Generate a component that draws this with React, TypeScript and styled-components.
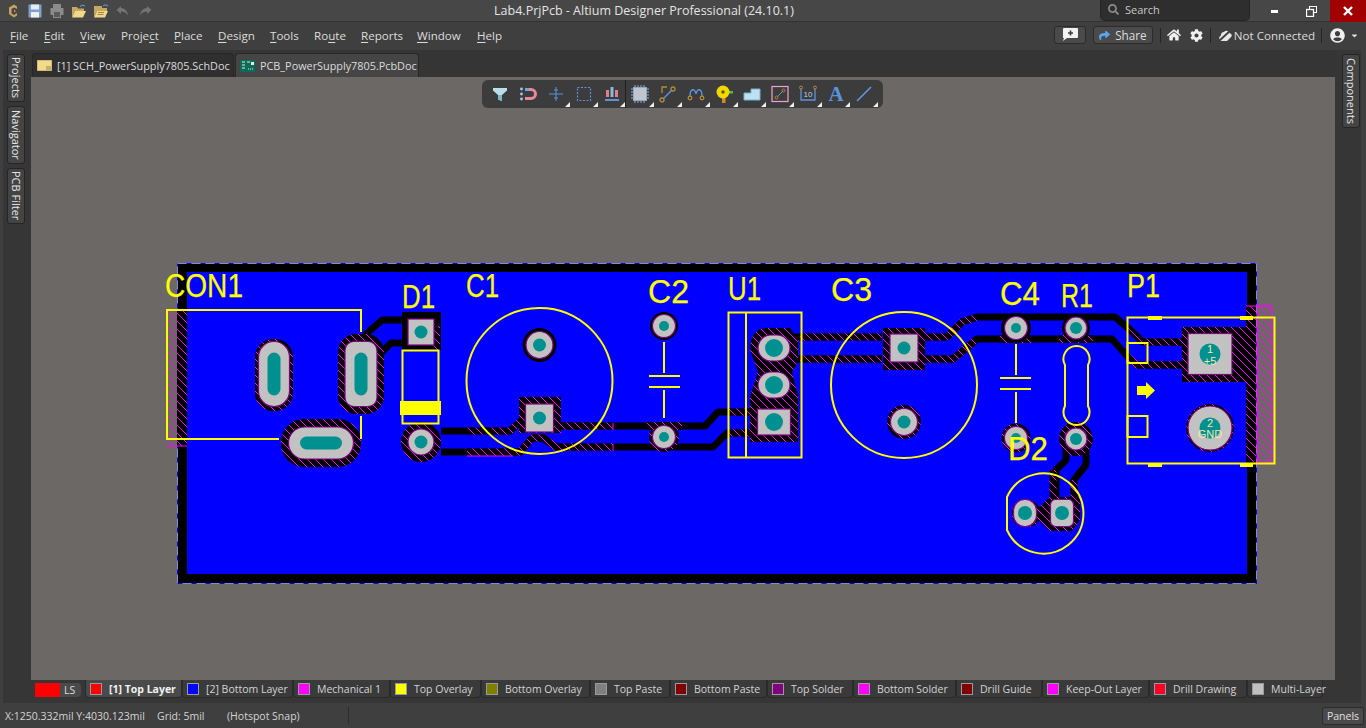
import React from "react";
import styled, { createGlobalStyle } from "styled-components";
import { FaHome, FaCog, FaUserCircle, FaSearch, FaShare, FaCaretDown } from "react-icons/fa";

const Global = createGlobalStyle`
  html, body { margin: 0; padding: 0; overflow: hidden; background: #3c3c3c; }
  #root { width: 1366px; height: 728px; }
  * { box-sizing: border-box; }
`;

const Shell = styled.div`
  width: 1366px; height: 728px; display: flex; flex-direction: column;
  font-family: "Open Sans", "Noto Sans", "Liberation Sans", sans-serif;
  color: #dcdcdc; background: #3c3c3c; overflow: hidden;
`;
const TitleBar = styled.div`
  height: 22px; display: grid; grid-template-columns: 493px 302px 1fr; align-items: center;
  background: #474747; border-bottom: 1px solid #333;
`;
const QuickBar = styled.div`display: flex; align-items: center; gap: 6px; padding-left: 5px; height: 21px;`;
const QuickIcon = styled.svg<{ $dim?: boolean }>`width: 16px; height: 16px; flex: none; opacity: ${(p) => (p.$dim ? 0.45 : 1)};`;
const TitleText = styled.div`font-size: 12.5px; color: #e4e4e4; white-space: nowrap; text-align: center;`;
const TitleRight = styled.div`display: flex; justify-content: flex-end; align-items: stretch; height: 21px;`;
const SearchBox = styled.div`
  width: 150px; height: 21px; background: #2e2e2e; border: 1px solid #252525; border-top: 0; border-radius: 0 0 5px 5px;
  display: flex; align-items: center; gap: 6px; padding: 0 0 2px 7px; font-size: 11px; color: #c8c8c8; margin-right: 6px;
  svg { color: #8a8a8a; font-size: 11px; }
`;
const WinButton = styled.div<{ $close?: boolean; $w: number }>`
  width: ${(p) => p.$w}px; height: 22px; display: flex; align-items: center; justify-content: center;
  background: ${(p) => (p.$close ? "#a00000" : "transparent")}; color: #fff;
`;
const MenuBar = styled.div`
  height: 28px; display: flex; align-items: center; background: #3f3f3f; padding: 0 0 2px 10px;
`;
const MenuItem = styled.span<{ $w: number }>`
  width: ${(p) => p.$w}px; flex: none; font-size: 11.6px; color: #dcdcdc; white-space: nowrap;
  u { text-underline-offset: 2px; }
`;
const MenuRight = styled.div`margin-left: auto; display: flex; align-items: center; height: 26px; padding-right: 5px;`;
const BarButton = styled.div<{ $w: number }>`
  width: ${(p) => p.$w}px; height: 18px; border: 1px solid #2b2b2b; border-radius: 3px; background: #4a4a4a;
  display: flex; align-items: center; justify-content: center; gap: 5px; font-size: 11.7px; color: #dcdcdc;
  margin-right: 7px;
`;
const BarSep = styled.div<{ $m: string }>`width: 1px; height: 15px; background: #252525; margin: ${(p) => p.$m};`;
const NotConnected = styled.span`font-size: 11.6px; color: #dcdcdc; margin-left: 2px; white-space: nowrap;`;

const Middle = styled.div`flex: 1; min-height: 0; display: flex;`;
const SideDock = styled.div<{ $side: "left" | "right" }>`
  width: 31px; flex: none; background: #363636; display: flex; flex-direction: column; gap: 4px;
  padding: 4px 0 0 7px;
  box-shadow: inset ${(p) => (p.$side === "left" ? "3px" : "-5px")} 0 0 #3f3f3f;
`;
const SideTab = styled.div<{ $h: number }>`
  width: 18px; height: ${(p) => p.$h}px; background: #444; border: 1px solid #252525; border-radius: 3px;
  writing-mode: vertical-rl; font-size: 11px; color: #e4e4e4; display: flex; align-items: center; justify-content: center;
  white-space: nowrap; line-height: 16px;
`;
const Center = styled.div`flex: 1; min-width: 0; display: flex; flex-direction: column;`;
const TabRow = styled.div`height: 27px; flex: none; display: flex; align-items: flex-end; gap: 1px; background: #353535; padding-left: 1px;`;
const DocTab = styled.div<{ $w: number; $active?: boolean }>`
  width: ${(p) => p.$w}px; height: 24px; display: flex; align-items: center; gap: 5px; padding-left: ${(p) => (p.$active ? "4px" : "4px")};
  font-size: 10.85px; white-space: nowrap; overflow: hidden; color: #dcdcdc;
  background: ${(p) => (p.$active ? "#454545" : "#2f2f2f")};
  border: 1px solid #272727; border-bottom: 0; border-radius: 4px 4px 0 0;
`;
const Canvas = styled.div`flex: 1; min-height: 0; position: relative; background: #6c6866; overflow: hidden;`;
const BoardSvg = styled.svg`display: block; width: 1304px; height: 602px;`;
const Toolbar = styled.div`
  position: absolute; left: 451px; top: 3px; height: 28px; padding: 0 5px 0 4px; display: flex;
  background: #3c3c3c; border-radius: 6px;
`;
const ToolCell = styled.div<{ $corner?: boolean; $sep?: boolean }>`
  position: relative; width: 28px; height: 28px; display: flex; align-items: center; justify-content: center;
  ${(p) => (p.$sep ? "border-right: 1px solid #1f1f1f;" : "")}
  ${(p) =>
    p.$corner
      ? `&::after { content: ""; position: absolute; right: 0; bottom: 1px; width: 0; height: 0;
         border-left: 5px solid transparent; border-bottom: 5px solid #eee; }`
      : ""}
`;
const ToolIcon = styled.svg`width: 20px; height: 20px; display: block;`;
const LetterA = styled.span`font-family: "Liberation Serif", serif; font-weight: 700; font-size: 21px; color: #5b94dc; line-height: 1;`;

const LayerBar = styled.div`height: 23px; flex: none; display: flex; align-items: flex-start; background: #363636;`;
const LsBlock = styled.div`
  margin: 3px 4px 0 4px; width: 46px; height: 14px; display: flex; border-radius: 0 4px 4px 0; background: #4a4a4a; overflow: hidden;
  font-size: 10.5px; color: #ddd; align-items: center; flex: none;
`;
const LsRed = styled.div`width: 25px; height: 14px; background: #ff0000; margin-right: 4px;`;
const LayerTab = styled.div<{ $active?: boolean; $w: number }>`
  width: ${(p) => p.$w}px; flex: none; height: 18px; display: flex; align-items: center; gap: 8px; padding-left: 5px;
  font-size: 10.5px; white-space: nowrap; color: ${(p) => (p.$active ? "#f2f2f2" : "#d4d4d4")};
  font-weight: ${(p) => (p.$active ? 700 : 400)};
  background: ${(p) => (p.$active ? "#4a4a4a" : "#3a3a3a")};
  border: 1px solid #2a2a2a; border-top: 0; border-radius: 0 0 4px 4px;
`;
const Swatch = styled.span<{ $c: string }>`
  width: 10px; height: 10px; flex: none; background: ${(p) => p.$c}; outline: 1px solid #9a9a9a; outline-offset: 0;
`;
const StatusBar = styled.div`
  height: 25px; flex: none; display: flex; align-items: center; background: #3f3f3f; font-size: 10.5px; color: #d4d4d4;
  padding-left: 5px; white-space: nowrap;
`;
const StatusCell = styled.span<{ $w: number }>`width: ${(p) => p.$w}px; flex: none;`;
const StatusSep = styled.div`width: 1px; height: 17px; background: #2d2d2d;`;
const PanelsBtn = styled.div`
  margin-left: auto; margin-right: 2px; width: 42px; height: 18px; background: #4a4a4a; border: 1px solid #2b2b2b; border-radius: 3px;
  display: flex; align-items: center; justify-content: center; font-size: 10.5px; color: #e0e0e0;
`;
const Silk = styled.text`
  font-family: "Liberation Sans", sans-serif; fill: #ffff00; stroke: #ffff00; stroke-width: 0.25px; font-size: 33px;
`;
const PadLabel = styled.text`
  font-family: "Liberation Sans", sans-serif; fill: #f4e8a8; font-size: 11px; text-anchor: middle;
`;

const GOLD = "#b08a3c";
const BLUE = "#5b94dc";

const layers: { name: string; c: string; w: number; active?: boolean }[] = [
  { name: "[1] Top Layer", c: "#ff0000", w: 97, active: true },
  { name: "[2] Bottom Layer", c: "#0000ff", w: 111 },
  { name: "Mechanical 1", c: "#ff00ff", w: 97 },
  { name: "Top Overlay", c: "#ffff00", w: 91 },
  { name: "Bottom Overlay", c: "#808000", w: 109 },
  { name: "Top Paste", c: "#808080", w: 80 },
  { name: "Bottom Paste", c: "#800000", w: 97 },
  { name: "Top Solder", c: "#800080", w: 86 },
  { name: "Bottom Solder", c: "#ff00ff", w: 103 },
  { name: "Drill Guide", c: "#800000", w: 86 },
  { name: "Keep-Out Layer", c: "#ff00ff", w: 107 },
  { name: "Drill Drawing", c: "#ff002a", w: 98 },
  { name: "Multi-Layer", c: "#c0c0c0", w: 76 },
];

const menus: [React.ReactNode, number][] = [
  [<><u>F</u>ile</>, 34],
  [<><u>E</u>dit</>, 36],
  [<><u>V</u>iew</>, 41],
  [<>Proje<u>c</u>t</>, 53],
  [<><u>P</u>lace</>, 44],
  [<><u>D</u>esign</>, 52],
  [<><u>T</u>ools</>, 44],
  [<>Ro<u>u</u>te</>, 47],
  [<><u>R</u>eports</>, 56],
  [<><u>W</u>indow</>, 60],
  [<><u>H</u>elp</>, 40],
];

const I = (p: { children: React.ReactNode }) => <ToolIcon viewBox="0 0 20 20">{p.children}</ToolIcon>;

const tools: { el: React.ReactNode; corner?: boolean; sep?: boolean }[] = [
  { el: <I><path d="M3 4h14v2.500l-5 4.500v6l-4-1.500V11L3 6.500z" fill="#b9dfe8" /><path d="M8 11v4.500l4 1.500v-6z" fill="#7fb6c6" /></I> },
  { el: <I><circle cx="3.500" cy="5" r="1.400" fill="#a8c8e8" /><circle cx="3.500" cy="10" r="1.400" fill="#a8c8e8" /><circle cx="3.500" cy="15" r="1.400" fill="#a8c8e8" /><path d="M7 5.500h6a4.500 4.500 0 0 1 0 9H7" fill="none" stroke="#e88a9c" strokeWidth="3" /><path d="M7 5.500h4" stroke="#6aa5e0" strokeWidth="3" /></I> },
  { el: <I><path d="M10 3v14M3 10h14M8 6h4M8 14h4" stroke={BLUE} strokeWidth="1" fill="none" /></I>, corner: true },
  { el: <I><rect x="3.500" y="3.500" width="13" height="13" fill="none" stroke={BLUE} strokeWidth="1.200" strokeDasharray="2 1.500" /></I>, corner: true },
  { el: <I><rect x="4" y="6" width="3" height="7" fill="#e87a8c" /><rect x="8.500" y="3" width="3" height="10" fill="#7fc0d8" /><rect x="13" y="6" width="3" height="7" fill="#e87a8c" /><rect x="3" y="15" width="14" height="2" fill={BLUE} /></I>, corner: true, sep: true },
  { el: <I><rect x="3.500" y="3.500" width="13" height="13" fill="#c0c6cc" stroke="#8fa8c8" /><path d="M1 5h2M1 8h2M1 11h2M1 14h2M17 5h2M17 8h2M17 11h2M17 14h2M5 1v2M8 1v2M11 1v2M14 1v2M5 17v2M8 17v2M11 17v2M14 17v2" stroke="#8fb0d8" /></I>, corner: true },
  { el: <I><path d="M5 15l9-9" stroke={BLUE} strokeWidth="1.400" /><circle cx="4" cy="16" r="2" fill="none" stroke={GOLD} strokeWidth="1.300" /><circle cx="15" cy="5" r="2" fill="none" stroke={GOLD} strokeWidth="1.300" /><path d="M4 9V3h5" fill="none" stroke={GOLD} strokeWidth="1.300" /></I>, corner: true },
  { el: <I><path d="M4 12C4 4 9 4 10 10C11 4 16 4 16 12" fill="none" stroke={BLUE} strokeWidth="1.400" /><circle cx="4" cy="14" r="1.800" fill="none" stroke={GOLD} strokeWidth="1.300" /><circle cx="16" cy="14" r="1.800" fill="none" stroke={GOLD} strokeWidth="1.300" /></I>, corner: true },
  { el: <I><rect x="8" y="12" width="3.500" height="7" fill="#d88a20" /><rect x="13" y="7" width="6" height="2.500" fill="#4ac04a" /><circle cx="9" cy="8" r="6.500" fill="#f0d800" /><circle cx="9" cy="8" r="1.800" fill="#6a5800" /></I>, corner: true },
  { el: <I><path d="M2 9h7V5h9v11H2z" fill="#bfe0f0" stroke="#7ab0d8" /></I>, corner: true },
  { el: <I><rect x="2" y="2.500" width="16" height="15" fill="none" stroke="#f0a0d8" strokeWidth="1.200" /><path d="M7 13l6-6" stroke={BLUE} /><circle cx="6.500" cy="13.500" r="1.500" fill="none" stroke={GOLD} /><circle cx="13.500" cy="6.500" r="1.500" fill="none" stroke={GOLD} /></I>, corner: true },
  { el: <I><path d="M3 5v11h14V5" fill="none" stroke={BLUE} strokeWidth="1.300" /><circle cx="3" cy="3.500" r="1.500" fill="none" stroke={GOLD} /><circle cx="17" cy="3.500" r="1.500" fill="none" stroke={GOLD} /><text x="10" y="13" fontSize="8" textAnchor="middle" fill="#b8cfe8" fontFamily="Liberation Sans">10</text></I>, corner: true },
  { el: <LetterA>A</LetterA>, corner: true },
  { el: <I><path d="M3 17L17 3" stroke={BLUE} strokeWidth="1.700" /></I>, corner: true },
];

/* ---------- PCB primitives ---------- */
const Track = ({ d, w = 7 }: { d: string; w?: number }) => <path d={d} fill="none" stroke="#000" strokeWidth={w} strokeLinejoin="round" />;
const Hatched = ({ d, w = 7 }: { d: string; w?: number }) => <path d={d} fill="none" stroke="url(#hatch)" strokeWidth={w} strokeLinejoin="round" />;
const Round = ({ x, y, r, d }: { x: number; y: number; r: number; d: number }) => (
  <g>
    <circle cx={x} cy={y} r={r} fill="#c2c2c2" stroke="#800080" strokeWidth="1.200" />
    <circle cx={x} cy={y} r={d} fill="#009090" />
  </g>
);
const Square = ({ x, y, w, h, d }: { x: number; y: number; w: number; h: number; d: number }) => (
  <g>
    <rect x={x - w / 2} y={y - h / 2} width={w} height={h} fill="#c2c2c2" stroke="#800080" strokeWidth="1.200" />
    <circle cx={x} cy={y} r={d} fill="#009090" />
  </g>
);
const Oblong = ({ x, y, w, h, dw, dh, rx }: { x: number; y: number; w: number; h: number; dw: number; dh: number; rx?: number }) => (
  <g>
    <rect x={x - w / 2} y={y - h / 2} width={w} height={h} rx={rx ?? Math.min(w, h) / 2} fill="#c2c2c2" stroke="#800080" strokeWidth="1.200" />
    <rect x={x - dw / 2} y={y - dh / 2} width={dw} height={dh} rx={Math.min(dw, dh) / 2} fill="#009090" />
  </g>
);
const Y = "#ffff00";

const Board = () => (
  <BoardSvg viewBox="31 77 1304 602">
    <defs>
      <pattern id="hatch" patternUnits="userSpaceOnUse" width="8" height="8">
        <rect width="8" height="8" fill="#000" />
        <path d="M-2 -2L10 10M-2 6L2 10M6 -2L10 2" stroke="#ff00ff" strokeWidth="1" />
      </pattern>
      <pattern id="hatchGrey" patternUnits="userSpaceOnUse" width="8" height="8">
        <path d="M-2 -2L10 10M-2 6L2 10M6 -2L10 2" stroke="#ff00ff" strokeWidth="1" />
      </pattern>
    </defs>

    {/* board + pour */}
    <rect x="177" y="263" width="1080" height="321" fill="#000" />
    <rect x="187" y="272" width="1060" height="302" fill="#0000ff" />
    <rect x="177.500" y="263.500" width="1079" height="320" fill="none" stroke="#0000ff" strokeWidth="1" />
    <rect x="177.500" y="263.500" width="1079" height="320" fill="none" stroke="#a8a8e0" strokeWidth="1" strokeDasharray="9 5" strokeOpacity="0.8" />

    {/* connector keep-out strips */}
    <rect x="177" y="309" width="10" height="137" fill="url(#hatch)" />
    <rect x="166" y="309" width="11" height="137" fill="url(#hatchGrey)" />
    <path d="M166 446H187" stroke="#ff00ff" />
    <rect x="1246" y="306" width="10" height="156" fill="url(#hatch)" />
    <rect x="1257" y="306" width="15" height="156" fill="url(#hatchGrey)" stroke="#ff00ff" strokeWidth="1" />
    <path d="M1246 306H1272" stroke="#ff00ff" />

    {/* tracks: plain copper clearance */}
    <Track d="M365 335L382 320H407" />
    <Track d="M378 356L391 343H407" />
    <Track d="M441 431H510L522 420" />
    <Track d="M441 452H520L532 438H543L556 447H613" />
    <Track d="M555 426H705L718 412H753" />
    <Track d="M613 447H713L727 433H753" />
    <Track d="M792 337H882" />
    <Track d="M792 359H882" />
    <Track d="M925 337H947L962 322L977 317H1115L1128 328" />
    <Track d="M925 359H953L977 339H1112L1128 357" />
    <Track d="M1128 328L1143 342H1182" />
    <Track d="M1128 357L1137 365H1182" />
    <Track d="M1066 440V460L1056 470V500" />
    <Track d="M1086 440V465L1074 480V510" />

    {/* tracks: hatched parts */}
    <Hatched d="M467 431H510L522 420" />
    <Hatched d="M467 452H520L532 438H543L556 447H613" />
    <Hatched d="M555 426H613" />
    <Hatched d="M728 412H753" />
    <Hatched d="M728 433H753" />
    <Hatched d="M800 337H882" />
    <Hatched d="M800 359H882" />
    <Hatched d="M925 337H947L962 322L977 317" />
    <Hatched d="M925 359H953L977 339" />
    <Hatched d="M1128 328L1143 342H1182" />
    <Hatched d="M1128 357L1137 365H1182" />
    <Hatched d="M1053 470V500" />
    <Hatched d="M1074 480V510" />
    <path d="M467 456H513" stroke="#ff00ff" />
    <path d="M613 423V430M613 444V451" stroke="#ff00ff" />

    {/* thermal / clearance areas */}
    <rect x="402" y="312" width="39" height="38" fill="#000" />
    <rect x="433" y="326" width="7" height="24" fill="url(#hatch)" />
    <rect x="338" y="334" width="46" height="80" rx="18" fill="url(#hatch)" />
    <rect x="255" y="339" width="38" height="72" rx="18" fill="url(#hatch)" />
    <rect x="281" y="419" width="80" height="48" rx="23" fill="url(#hatch)" />
    <circle cx="421" cy="442" r="20" fill="url(#hatch)" />
    <rect x="519" y="397" width="42" height="36" fill="url(#hatch)" />
    <path d="M750 350Q750 328 768 328H790L798 340V362L792 372L798 396V442H750V396L758 372Z" fill="url(#hatch)" />
    <rect x="883" y="328" width="42" height="42" fill="url(#hatch)" />
    <rect x="647" y="422" width="35" height="8" fill="url(#hatch)" />
    <rect x="1000" y="335" width="31" height="8" fill="url(#hatch)" />
    <rect x="1059" y="335" width="34" height="8" fill="url(#hatch)" />
    <circle cx="1016" cy="328" r="15" fill="#000" />
    <circle cx="664" cy="437" r="15" fill="url(#hatch)" />
    <circle cx="1076" cy="439" r="17" fill="url(#hatch)" />
    <circle cx="1016" cy="438" r="14.500" fill="url(#hatch)" />
    <circle cx="1076" cy="328" r="14" fill="#000" />
    <circle cx="664" cy="326" r="14" fill="#000" />
    <circle cx="539.500" cy="345" r="17" fill="#000" />
    <circle cx="904" cy="422" r="17" fill="url(#hatch)" />
    <circle cx="1210" cy="428" r="24" fill="url(#hatch)" />
    <rect x="1182" y="327" width="64" height="55" fill="url(#hatch)" />
    <rect x="1012" y="500" width="28" height="27" rx="12" fill="url(#hatch)" />
    <path d="M1032 514L1050 497H1080V520L1072 531H1050Z" fill="url(#hatch)" />

    {/* pads */}
    <Oblong x={274} y={374} w={31} h={65} dw={13} dh={43} />
    <Oblong x={361} y={374} w={32} h={65} dw={13} dh={43} rx={9} />
    <Oblong x={321} y={443} w={65} h={32} dw={42} dh={13} />
    <Square x={421} y={332} w={26} h={26} d={6.500} />
    <Round x={421} y={442} r={13} d={6.500} />
    <Round x={539.500} y={345} r={13.500} d={6.500} />
    <Square x={539.500} y={418} w={28} h={28} d={6.500} />
    <Round x={664} y={326} r={11.500} d={5} />
    <Round x={664} y={437} r={11.500} d={5} />
    <Oblong x={774} y={348} w={32} h={26} dw={18} dh={18} rx={13} />
    <Oblong x={774} y={385} w={32} h={26} dw={18} dh={18} rx={13} />
    <Square x={774} y={422} w={33} h={26} d={9} />
    <Square x={904} y={348} w={28} h={28} d={6.500} />
    <Round x={904} y={422} r={13.500} d={6.500} />
    <Round x={1016} y={328} r={11.500} d={5} />
    <Round x={1016} y={438} r={11.500} d={5} />
    <Round x={1076} y={328} r={11} d={6} />
    <Round x={1076} y={439} r={11} d={6} />
    <Square x={1210} y={354} w={44} h={41} d={10.500} />
    <Round x={1210} y={428} r={22} d={10.500} />
    <Oblong x={1025} y={513} w={23} h={27} dw={14} dh={14} rx={11} />
    <Oblong x={1062} y={513} w={23} h={27} dw={14} dh={14} rx={5} />
    <PadLabel x="1210" y="353">1</PadLabel>
    <PadLabel x="1210" y="365">+5</PadLabel>
    <PadLabel x="1210" y="427">2</PadLabel>
    <PadLabel x="1210" y="438">GND</PadLabel>

    {/* silkscreen */}
    <g fill="none" stroke={Y} strokeWidth="2">
      <path d="M279 439H167V310H361V332M361 416V439" />
      <rect x="402.500" y="350.500" width="36" height="73" />
      <circle cx="539.500" cy="381" r="73" />
      <path d="M664 342V373M649 376H680M649 387H680M664 390V418" />
      <rect x="728.500" y="312.500" width="73" height="145" />
      <path d="M746 312V458" />
      <circle cx="904" cy="385" r="73" />
      <path d="M1016 344V375M1000 378H1031M1000 389H1031M1016 392V423" />
      <path d="M1065 365A13 13 0 1 1 1088 365V406A13 13 0 1 1 1065 406Z" />
      <path d="M1007 497A40 40 0 1 1 1007 530Z" />
      <rect x="1127.500" y="317.500" width="147" height="146" />
      <rect x="1127.500" y="343" width="20" height="20" />
      <rect x="1127.500" y="416" width="20" height="21" />
    </g>
    <rect x="400" y="401" width="41" height="14" fill={Y} />
    <path d="M1137 386H1146V382L1155 390.500L1146 399V395H1137Z" fill={Y} />
    <path d="M1148 316h14v4h-14zM1240 316h13v4h-13zM1148 463h14v4h-14zM1240 463h13v4h-13z" fill={Y} />

    <Silk x="165" y="297" textLength="78" lengthAdjust="spacingAndGlyphs">CON1</Silk>
    <Silk x="402" y="308" textLength="33" lengthAdjust="spacingAndGlyphs">D1</Silk>
    <Silk x="466" y="297" textLength="33" lengthAdjust="spacingAndGlyphs">C1</Silk>
    <Silk x="648" y="303" textLength="41" lengthAdjust="spacingAndGlyphs">C2</Silk>
    <Silk x="728" y="300" textLength="33" lengthAdjust="spacingAndGlyphs">U1</Silk>
    <Silk x="831" y="301" textLength="41" lengthAdjust="spacingAndGlyphs">C3</Silk>
    <Silk x="1000" y="305" textLength="40" lengthAdjust="spacingAndGlyphs">C4</Silk>
    <Silk x="1061" y="307" textLength="32" lengthAdjust="spacingAndGlyphs">R1</Silk>
    <Silk x="1127" y="297" textLength="33" lengthAdjust="spacingAndGlyphs">P1</Silk>
    <Silk x="1008" y="460" textLength="40" lengthAdjust="spacingAndGlyphs">D2</Silk>
  </BoardSvg>
);

export default function App() {
  return (
    <Shell>
      <Global />
      <TitleBar>
        <QuickBar>
          <QuickIcon viewBox="0 0 16 16"><path d="M9 1.500L4 4.500V11l5 3.500 3-2V10L9 12 6.500 10.500V6L9 4.500 12 6V3.500zM9 6.800l2 1.200-2 1.300z" fill="#c9a262" /></QuickIcon>
          <QuickIcon viewBox="0 0 16 16"><path d="M1.500 1.500h13v13h-13z" fill="#7f9fd0" /><rect x="4" y="1.500" width="8" height="5" fill="#e8ecf4" /><rect x="4" y="9" width="8" height="5.500" fill="#f0f0f0" /></QuickIcon>
          <QuickIcon viewBox="0 0 16 16"><path d="M4 1h8v4H4zM1.500 5h13v7H12v3H4v-3H1.500z" fill="#8b8b8b" /><rect x="5" y="9" width="6" height="5" fill="#5a5a5a" /></QuickIcon>
          <QuickIcon viewBox="0 0 16 16"><path d="M1 4h5l1 1.500h6V8H4L1 14z" fill="#c8a860" /><path d="M4 8h11l-3 6.500H1z" fill="#f0d88c" /><path d="M9 3.500Q11 1 14 3" stroke="#6aa5e0" fill="none" /></QuickIcon>
          <QuickIcon viewBox="0 0 16 16"><path d="M1 3h8v2h5v3H4l-3 6z" fill="#c8a860" /><path d="M4 8h11l-3 6.500H1z" fill="#f0d88c" /><path d="M5 9.500h6M4.500 11.500h6" stroke="#a08440" /><path d="M10 3Q12 .5 15 3" stroke="#6aa5e0" fill="none" /></QuickIcon>
          <QuickIcon viewBox="0 0 16 16" $dim><path d="M6 3L1.500 7 6 11V8.500c3 0 5.500 1 7 4 0-4-3-7-7-7.500z" fill="#aaa" /></QuickIcon>
          <QuickIcon viewBox="0 0 16 16" $dim><path d="M10 3l4.500 4L10 11V8.500c-3 0-5.500 1-7 4 0-4 3-7 7-7.500z" fill="#aaa" /></QuickIcon>
        </QuickBar>
        <TitleText>Lab4.PrjPcb - Altium Designer Professional (24.10.1)</TitleText>
        <TitleRight>
          <SearchBox><FaSearch />Search</SearchBox>
          <WinButton $w={37}><svg width="8" height="3"><rect width="7" height="3" fill="#fff" /></svg></WinButton>
          <WinButton $w={37}><svg width="11" height="11" fill="none" stroke="#fff"><rect x="3.500" y="0.500" width="7" height="6" /><rect x="0.500" y="3.500" width="7" height="7" fill="#474747" strokeWidth="1.300" /></svg></WinButton>
          <WinButton $w={36} $close><svg width="10" height="10" stroke="#fff" strokeWidth="2.400"><path d="M1 1l8 8M9 1l-8 8" /></svg></WinButton>
        </TitleRight>
      </TitleBar>

      <MenuBar>
        {menus.map(([label, w], i) => <MenuItem key={i} $w={w}>{label}</MenuItem>)}
        <MenuRight>
          <BarButton $w={32}><svg width="16" height="14" viewBox="0 0 16 14"><path d="M2 0h13a1 1 0 0 1 1 1v8a1 1 0 0 1-1 1H5L1 13l1-3H1V1a1 1 0 0 1 1-1z" fill="#f2f2f2" /><path d="M8.500 2.500v5M6 5h5" stroke="#3a3a3a" strokeWidth="1.600" /></svg></BarButton>
          <BarButton $w={60}><FaShare color="#5ba4ef" size={11} />Share</BarButton>
          <BarSep $m="0" />
          <FaHome size={14} color="#f0f0f0" style={{ marginLeft: 6 }} />
          <FaCog size={13} color="#f0f0f0" style={{ marginLeft: 9 }} />
          <BarSep $m="0 6px 0 7px" />
          <svg width="14" height="13" viewBox="0 0 14 13" style={{ marginLeft: 1 }}><path d="M3 6.500A3 3 0 0 1 6 3a3.500 3.500 0 0 1 6 1.500c1.500 0 2 1.500 1.500 3L9 12H3A3 3 0 0 1 3 6.500z" fill="#e8e8e8" /><path d="M1 12L13 1" stroke="#3f3f3f" strokeWidth="2" /></svg>
          <NotConnected>Not Connected</NotConnected>
          <BarSep $m="0 0 0 6px" />
          <FaUserCircle size={15} color="#f0f0f0" style={{ marginLeft: 8 }} />
          <FaCaretDown size={9} color="#e0e0e0" style={{ marginLeft: 5, marginRight: 2 }} />
        </MenuRight>
      </MenuBar>

      <Middle>
        <SideDock $side="left">
          <SideTab $h={48}>Projects</SideTab>
          <SideTab $h={58}>Navigator</SideTab>
          <SideTab $h={56}>PCB Filter</SideTab>
        </SideDock>
        <Center>
          <TabRow>
            <DocTab $w={202}>
              <svg width="15" height="11" viewBox="0 0 15 11" style={{ flex: "none" }}><rect width="15" height="11" fill="#f2da8c" stroke="#b49a50" /><path d="M9 7h5M9 9h5" stroke="#8a8a5a" /></svg>
              [1] SCH_PowerSupply7805.SchDoc
            </DocTab>
            <DocTab $w={184} $active>
              <svg width="15" height="12" viewBox="0 0 15 12" style={{ flex: "none" }}><rect width="15" height="12" fill="#0d6b5a" /><path d="M2 2h3M2 5h3M2 8h3M7 2h3M8 9h1M10 9h1M12 9h1" stroke="#e0f0e0" /><rect x="11" y="2" width="3" height="3" fill="#e0f0e0" /></svg>
              PCB_PowerSupply7805.PcbDoc
            </DocTab>
          </TabRow>
          <Canvas>
            <Board />
            <Toolbar>
              {tools.map((t, i) => <ToolCell key={i} $corner={t.corner} $sep={t.sep}>{t.el}</ToolCell>)}
            </Toolbar>
          </Canvas>
          <LayerBar>
            <LsBlock><LsRed />LS</LsBlock>
            {layers.map((l) => (
              <LayerTab key={l.name} $w={l.w} $active={l.active}><Swatch $c={l.c} />{l.name}</LayerTab>
            ))}
          </LayerBar>
        </Center>
        <SideDock $side="right">
          <SideTab $h={74}>Components</SideTab>
        </SideDock>
      </Middle>

      <StatusBar>
        <StatusCell $w={152}>X:1250.332mil Y:4030.123mil</StatusCell>
        <StatusCell $w={70}>Grid: 5mil</StatusCell>
        <StatusCell $w={121}>(Hotspot Snap)</StatusCell>
        <StatusSep />
        <PanelsBtn>Panels</PanelsBtn>
      </StatusBar>
    </Shell>
  );
}
